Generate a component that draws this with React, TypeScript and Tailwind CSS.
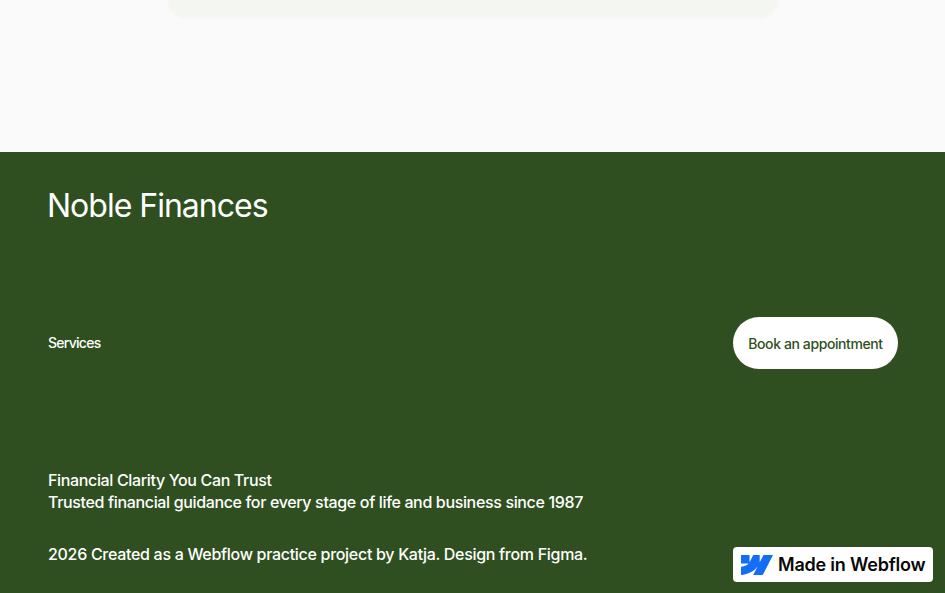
const sans = "font-['Inter','Liberation_Sans',sans-serif]";

function WebflowBadge() {
  return (
    <a className="absolute right-3 bottom-[11px] flex h-[35px] w-[200px] items-center gap-[5px] rounded-[4px] bg-white pl-2">
      <svg viewBox="0 0 24 24" className="h-[32px] w-[32px] shrink-0" fill="#146ef5">
        <path d="m24 4.515-7.658 14.97H9.149l3.205-6.204h-.144C9.566 16.713 5.621 18.973 0 19.485v-6.118s3.596-.213 5.71-2.435H0V4.515h6.417v5.278l.144-.001 2.622-5.277h4.854v5.244h.144l2.72-5.244H24Z" />
      </svg>
      <span className="text-[18px] leading-none font-semibold tracking-[-0.2px] whitespace-nowrap text-[#080808]">Made in Webflow</span>
    </a>
  );
}

export default function App() {
  return (
    <div className={`relative h-[593px] overflow-hidden bg-[#fafafa] ${sans}`}>
      <div className="flex h-[152px] justify-center overflow-hidden">
        <div className="h-[18px] w-[610px] rounded-b-[20px] bg-[#f4f6f2] blur-[1px]" />
      </div>

      <footer className="flex h-[441px] flex-col bg-[#2f4f20] pr-[47px] pl-12 text-white">
        <div className="mt-[34px] -ml-px text-[32px] leading-[40px] font-normal tracking-[-1px]">Noble Finances</div>

        <div className="mt-[91px] flex items-center justify-between">
          <a className="-mt-px text-[14px] font-medium tracking-[-0.72px]">Services</a>
          <a className="flex h-[52px] w-[165px] items-center justify-center rounded-[26px] bg-white text-[14px] font-medium tracking-[-0.4px] text-[#2f4f20]">
            Book an appointment
          </a>
        </div>

        <div className="mt-[100px] text-[16px] leading-[22px] font-medium tracking-[-0.35px]">
          <p>Financial Clarity You Can Trust</p>
          <p>Trusted financial guidance for every stage of life and business since 1987</p>
        </div>
        <p className="mt-[30px] text-[16px] leading-[22px] font-medium tracking-[-0.3px]">2026 Created as a Webflow practice project by Katja. Design from Figma.</p>
      </footer>

      <WebflowBadge />
    </div>
  );
}
